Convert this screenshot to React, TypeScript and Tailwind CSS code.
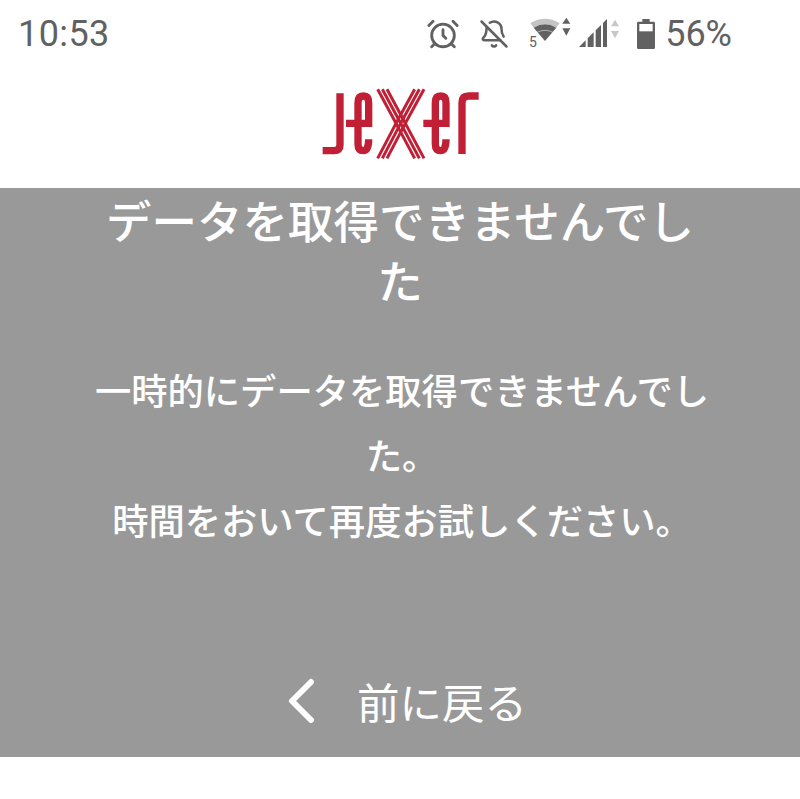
import { AlarmClock, BellOff } from 'lucide-react'

const sans = "font-['Noto_Sans_CJK_JP','Noto_Sans',sans-serif]"

function WifiIcon() {
  return (
    <svg width="44" height="40" viewBox="0 0 132 120" className="text-[#616161]">
      <path d="M4 18 Q48 -8 92 18 L82 32 Q48 12 14 32 Z" fill="#c4c4c4" />
      <path d="M14 32 Q48 12 82 32 L48 72 Z" fill="currentColor" />
      <path d="M24 46 Q48 34 72 46" stroke="#fff" strokeWidth="3" fill="none" opacity="0.5" />
      <text x="0" y="90" fontSize="42" fill="currentColor" fontFamily="Roboto, sans-serif">5</text>
      <path d="M112 2 L124 20 H100 Z M112 56 L124 34 H100 Z" fill="currentColor" />
    </svg>
  )
}

function SignalIcon() {
  return (
    <svg width="41" height="30" viewBox="0 0 123 90">
      <path d="M0 84 L20 64 V84 Z M26 58 L44 40 V84 H26 Z M50 34 L66 18 V84 H50 Z M72 12 L84 0 V84 H72 Z" fill="#616161" />
      <path d="M108 2 L120 22 H96 Z M108 58 L120 36 H96 Z" fill="#c8c8c8" />
    </svg>
  )
}

function BatteryIcon() {
  return (
    <svg width="18" height="30" viewBox="0 0 54 90">
      <path d="M16 0 H38 V8 H50 Q54 8 54 12 V86 Q54 90 50 90 H4 Q0 90 0 86 V12 Q0 8 4 8 H16 Z" fill="#616161" />
      <rect x="7" y="15" width="40" height="22" fill="#fff" />
    </svg>
  )
}

function Logo() {
  const red = '#c01f35'
  return (
    <svg width="180" height="85" viewBox="0 0 540 255" fill="none">
      <g stroke={red} strokeWidth="22">
        <path d="M90 40 V195 Q90 212 72 212 H38" />
        <path d="M108 130 H176 V68 Q176 48 160 48 Q144 48 144 68 V192 Q144 212 160 212 Q176 212 176 178" />
        <path d="M340 130 H408 V68 Q408 48 392 48 Q376 48 376 68 V192 Q376 212 392 212 Q408 212 408 178" />
        <path d="M456 222 V68 Q456 48 476 48 H506" />
      </g>
      <g stroke={red} strokeWidth="9">
        <path d="M203 28 L258 130 L203 235" />
        <path d="M217 28 L272 130 L217 235" />
        <path d="M231 28 L286 130 L231 235" />
        <path d="M342 28 L286 130 L342 235" />
        <path d="M328 28 L272 130 L328 235" />
        <path d="M314 28 L258 130 L314 235" />
      </g>
    </svg>
  )
}

export default function App() {
  return (
    <div className={`h-[799px] w-full bg-white flex flex-col ${sans}`}>
      {/* Status bar */}
      <div className="h-[68px] flex items-center justify-between pl-[18px] pr-[68px] text-[#616161] font-['Roboto',sans-serif]">
        <span className="text-[36px] leading-none tracking-[0.4px]">10:53</span>
        <div className="flex items-center">
          <AlarmClock size={34} strokeWidth={2} />
          <BellOff size={30} strokeWidth={2} className="ml-[19px]" />
          <div className="ml-[20px] mt-[6px]"><WifiIcon /></div>
          <div className="ml-[6px]"><SignalIcon /></div>
          <div className="ml-[17px]"><BatteryIcon /></div>
          <span className="ml-[10px] text-[36px] leading-none">56%</span>
        </div>
      </div>

      {/* Logo */}
      <div className="h-[120px] flex justify-center pt-[12px]">
        <Logo />
      </div>

      {/* Error panel */}
      <div className="h-[569px] bg-[#999999] text-white px-[90px] pt-px text-center">
        <h1 className="text-[45.5px] leading-[60px] font-medium">データを取得できませんでした</h1>
        <p className="mt-[48px] pl-1 text-[36.3px] leading-[65px] font-medium">
          一時的にデータを取得できませんでした。
          <br />
          時間をおいて再度お試しください。
        </p>
        <div className="mt-[119px] ml-[12px] flex items-center justify-center">
          <svg width="32" height="46" viewBox="0 0 32 46" fill="none" className="mr-[40px]">
            <path d="M26 4 L7 23 L26 42" stroke="#fff" strokeWidth="6" strokeLinecap="round" strokeLinejoin="round" />
          </svg>
          <span className="text-[42.5px] leading-[60px]">前に戻る</span>
        </div>
      </div>
    </div>
  )
}
